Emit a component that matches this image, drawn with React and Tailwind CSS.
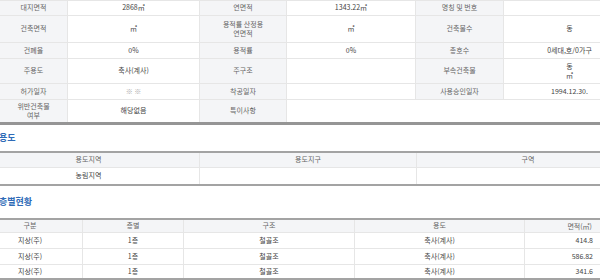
const LBL = "bg-[#f4f5f7] text-[#666]";
const VAL = "bg-white text-[#444]";

function Cell({ w, label, children, noBorder }) {
  return (
    <div
      className={`${w} shrink-0 h-full flex items-center justify-center text-center leading-[1.35] ${
        noBorder ? "" : "border-r border-[#e6e6e6]"
      } ${label ? LBL : VAL}`}
    >
      {children}
    </div>
  );
}

function InfoRow({ h, children, last }) {
  return (
    <div
      className={`${h} flex w-[636px] ${
        last ? "border-b-[3px] border-[#959595]" : "border-b border-[#e6e6e6]"
      }`}
    >
      {children}
    </div>
  );
}

export default function App() {
  return (
    <div className="w-[600px] h-[280px] overflow-hidden bg-white text-[7px] font-['Noto_Sans_CJK_KR','Noto_Sans',sans-serif]">
      {/* 기본 정보 */}
      <div className="border-t border-[#e6e6e6]">
        <InfoRow h="h-[15px]">
          <Cell w="w-[68px]" label>대지면적</Cell>
          <Cell w="w-[132px]">2868㎡</Cell>
          <Cell w="w-[87px]" label>연면적</Cell>
          <Cell w="w-[129px]">1343.22㎡</Cell>
          <Cell w="w-[88px]" label>명칭 및 번호</Cell>
          <Cell w="w-[132px]"></Cell>
        </InfoRow>
        <InfoRow h="h-[27px]">
          <Cell w="w-[68px]" label>건축면적</Cell>
          <Cell w="w-[132px]">㎡</Cell>
          <Cell w="w-[87px]" label>
            용적률 산정용
            <br />
            연면적
          </Cell>
          <Cell w="w-[129px]">㎡</Cell>
          <Cell w="w-[88px]" label>건축물수</Cell>
          <Cell w="w-[132px]">동</Cell>
        </InfoRow>
        <InfoRow h="h-[16px]">
          <Cell w="w-[68px]" label>건폐율</Cell>
          <Cell w="w-[132px]">0%</Cell>
          <Cell w="w-[87px]" label>용적률</Cell>
          <Cell w="w-[129px]">0%</Cell>
          <Cell w="w-[88px]" label>총호수</Cell>
          <Cell w="w-[132px]">0세대,호/0가구</Cell>
        </InfoRow>
        <InfoRow h="h-[25px]">
          <Cell w="w-[68px]" label>주용도</Cell>
          <Cell w="w-[132px]">축사(계사)</Cell>
          <Cell w="w-[87px]" label>주구조</Cell>
          <Cell w="w-[129px]"></Cell>
          <Cell w="w-[88px]" label>부속건축물</Cell>
          <Cell w="w-[132px]">
            동
            <br />
            ㎡
          </Cell>
        </InfoRow>
        <InfoRow h="h-[16px]">
          <Cell w="w-[68px]" label>허가일자</Cell>
          <Cell w="w-[132px]">
            <span className="text-[#aaa]">※ ※</span>
          </Cell>
          <Cell w="w-[87px]" label>착공일자</Cell>
          <Cell w="w-[129px]"></Cell>
          <Cell w="w-[88px]" label>사용승인일자</Cell>
          <Cell w="w-[132px]">1994.12.30.</Cell>
        </InfoRow>
        <InfoRow h="h-[25px]" last>
          <Cell w="w-[68px]" label>
            위반건축물
            <br />
            여부
          </Cell>
          <Cell w="w-[132px]">해당없음</Cell>
          <Cell w="w-[87px]" label>특이사항</Cell>
          <Cell w="w-[349px]" noBorder></Cell>
        </InfoRow>
      </div>

      <div className="-ml-[22px] w-[661px]">
        {/* 용도 */}
        <div className="h-[26px] flex items-center pl-[21px] text-[9px] font-bold text-[#2f6bb7]">
          용도
        </div>
        <div className="border-t-2 border-b-2 border-[#a3a3a3]">
          <div className="h-[15px] flex border-b border-[#e6e6e6]">
            <Cell w="w-[222px]" label>용도지역</Cell>
            <Cell w="w-[217px]" label>용도지구</Cell>
            <Cell w="w-[222px]" label noBorder>구역</Cell>
          </div>
          <div className="h-[16px] flex">
            <Cell w="w-[222px]">농림지역</Cell>
            <Cell w="w-[217px]"></Cell>
            <Cell w="w-[222px]" noBorder></Cell>
          </div>
        </div>

        {/* 층별현황 */}
        <div className="h-[32px] flex items-center pl-[21px] text-[9px] font-bold text-[#2f6bb7]">
          층별현황
        </div>
        <div className="w-[622px] border-t-2 border-b-2 border-[#a3a3a3]">
          <div className="h-[13px] flex border-b border-[#e6e6e6]">
            <Cell w="w-[105px]" label>구분</Cell>
            <Cell w="w-[101px]" label>층별</Cell>
            <Cell w="w-[171px]" label>구조</Cell>
            <Cell w="w-[170px]" label>용도</Cell>
            <div className="w-[75px] h-full flex items-center justify-end pr-[8px] bg-[#f4f5f7] text-[#666]">
              면적(㎡)
            </div>
          </div>
          {[
            ["414.8", false],
            ["586.82", false],
            ["341.6", true],
          ].map(([area, last]) => (
            <div
              key={area}
              className={`${last ? "h-[13px]" : "h-[16px] border-b border-[#e6e6e6]"} flex`}
            >
              <Cell w="w-[105px]">지상(주)</Cell>
              <Cell w="w-[101px]">1층</Cell>
              <Cell w="w-[171px]">철골조</Cell>
              <Cell w="w-[170px]">축사(계사)</Cell>
              <div className="w-[75px] h-full flex items-center justify-end pr-[7px] text-[#444]">
                {area}
              </div>
            </div>
          ))}
        </div>
      </div>
    </div>
  );
}
